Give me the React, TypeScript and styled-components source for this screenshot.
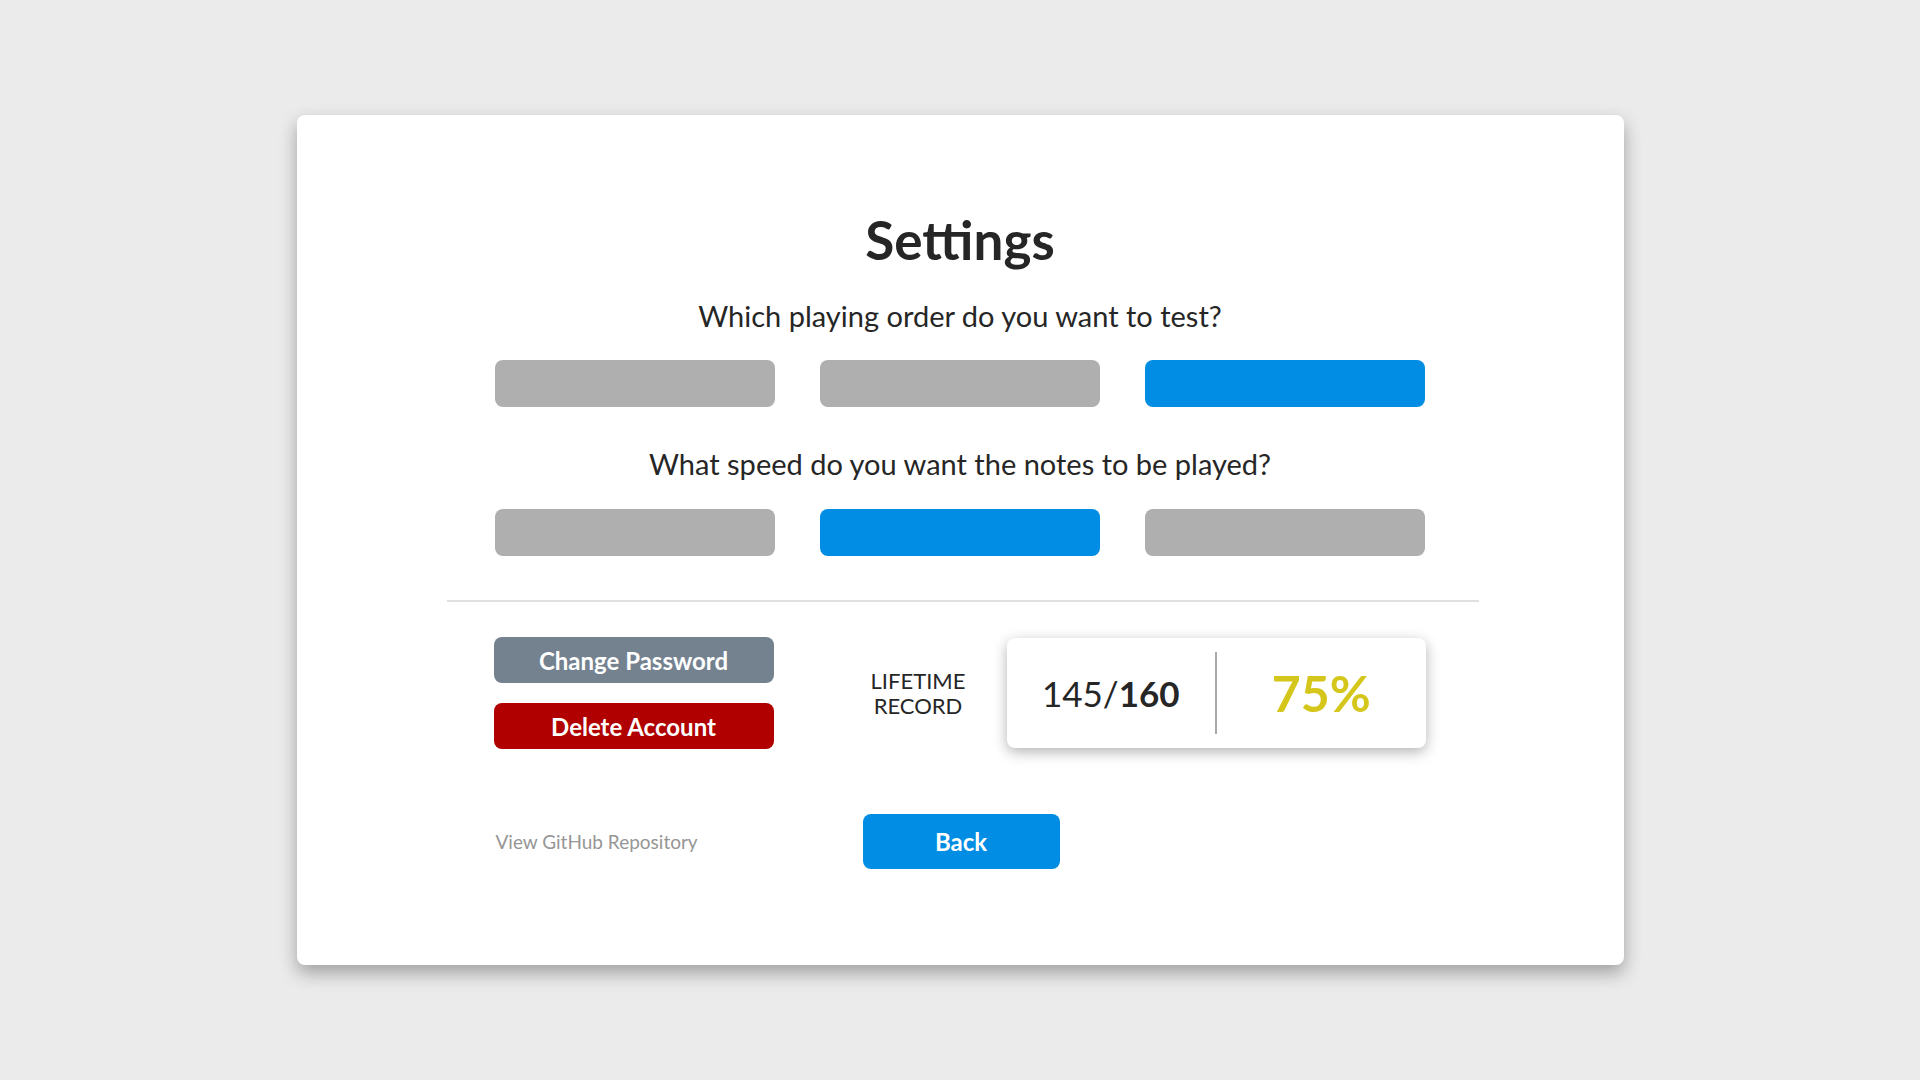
import React from "react";
import styled, { createGlobalStyle } from "styled-components";

const GlobalStyle = createGlobalStyle`
  html, body {
    margin: 0;
    padding: 0;
    background: #ebebeb;
    font-family: Lato, "Open Sans", Arial, sans-serif;
    color: #262626;
  }
`;

const Page = styled.div`
  width: 1920px;
  height: 1080px;
  display: flex;
  justify-content: center;
  padding-top: 115px;
  box-sizing: border-box;
`;

const Card = styled.div`
  width: 1327px;
  height: 850px;
  background: #fff;
  border-radius: 8px;
  box-shadow: 0 8px 18px rgba(0, 0, 0, 0.32);
  box-sizing: border-box;
  padding-top: 95px;
  display: flex;
  flex-direction: column;
  align-items: center;
`;

const Title = styled.h1`
  margin: 0;
  font-size: 53px;
  line-height: 60px;
  font-weight: 700;
  color: #262626;
`;

const Question = styled.p<{ $top: number }>`
  margin: ${({ $top }) => $top}px 0 0;
  font-size: 29px;
  line-height: 34px;
  font-weight: 400;
  color: #262626;
`;

const OptionRow = styled.div<{ $top: number }>`
  margin-top: ${({ $top }) => $top}px;
  display: flex;
  gap: 45px;
`;

const Option = styled.button<{ $active?: boolean }>`
  width: 280px;
  height: 47px;
  border: none;
  border-radius: 8px;
  background: ${({ $active }) => ($active ? "#028de4" : "#afafaf")};
  cursor: pointer;
`;

const Divider = styled.hr`
  width: 1032px;
  margin: 44px 0 0 6px;
  border: none;
  border-top: 2px solid #e0e0e0;
`;

const AccountSection = styled.div`
  margin-top: 35px;
  width: 933px;
  display: flex;
  align-items: center;
`;

const AccountButtons = styled.div`
  flex: none;
  display: flex;
  flex-direction: column;
  gap: 20px;
  width: 280px;
`;

const AccountButton = styled.button<{ $danger?: boolean }>`
  height: 46px;
  border: none;
  border-radius: 8px;
  background: ${({ $danger }) => ($danger ? "#b00000" : "#748290")};
  color: #fff;
  font-family: Lato, Arial, sans-serif;
  font-size: 24px;
  font-weight: 700;
  cursor: pointer;
`;

const RecordLabel = styled.div`
  flex: none;
  margin-left: 93px;
  width: 103px;
  text-align: center;
  font-size: 22px;
  line-height: 25px;
  font-weight: 400;
  color: #262626;
`;

const StatsCard = styled.div`
  flex: none;
  margin-left: 37px;
  width: 419px;
  height: 110px;
  border-radius: 8px;
  background: #fff;
  box-shadow: 0 4px 14px rgba(0, 0, 0, 0.3);
  display: grid;
  grid-template-columns: 1fr 2px 1fr;
  align-items: center;
`;

const StatsDivider = styled.div`
  height: 82px;
  background: #a9a9a9;
`;

const Fraction = styled.div`
  text-align: center;
  font-size: 35px;
  font-weight: 400;
  color: #262626;
  b {
    font-weight: 700;
  }
`;

const Percent = styled.div`
  text-align: center;
  font-size: 50px;
  font-weight: 700;
  color: #d5c61b;
`;

const FooterRow = styled.div`
  margin-top: 65px;
  width: 933px;
  display: flex;
  align-items: center;
`;

const RepoLink = styled.a`
  flex: none;
  width: 369px;
  padding-left: 2px;
  box-sizing: border-box;
  font-size: 19px;
  color: #969696;
  text-decoration: none;
`;

const BackButton = styled.button`
  width: 197px;
  height: 55px;
  border: none;
  border-radius: 8px;
  background: #028de4;
  color: #fff;
  font-family: Lato, Arial, sans-serif;
  font-size: 24px;
  font-weight: 700;
  cursor: pointer;
`;

const App: React.FC = () => {
  const [order, setOrder] = React.useState(2);
  const [speed, setSpeed] = React.useState(1);

  return (
    <>
      <GlobalStyle />
      <Page>
        <Card>
          <Title>Settings</Title>
          <Question $top={29}>Which playing order do you want to test?</Question>
          <OptionRow $top={27}>
            {[0, 1, 2].map((i) => (
              <Option key={i} $active={order === i} onClick={() => setOrder(i)} />
            ))}
          </OptionRow>
          <Question $top={40}>What speed do you want the notes to be played?</Question>
          <OptionRow $top={28}>
            {[0, 1, 2].map((i) => (
              <Option key={i} $active={speed === i} onClick={() => setSpeed(i)} />
            ))}
          </OptionRow>
          <Divider />
          <AccountSection>
            <AccountButtons>
              <AccountButton>Change Password</AccountButton>
              <AccountButton $danger>Delete Account</AccountButton>
            </AccountButtons>
            <RecordLabel>
              LIFETIME
              <br />
              RECORD
            </RecordLabel>
            <StatsCard>
              <Fraction>
                145/<b>160</b>
              </Fraction>
              <StatsDivider />
              <Percent>75%</Percent>
            </StatsCard>
          </AccountSection>
          <FooterRow>
            <RepoLink href="#">View GitHub Repository</RepoLink>
            <BackButton>Back</BackButton>
          </FooterRow>
        </Card>
      </Page>
    </>
  );
};

export default App;
